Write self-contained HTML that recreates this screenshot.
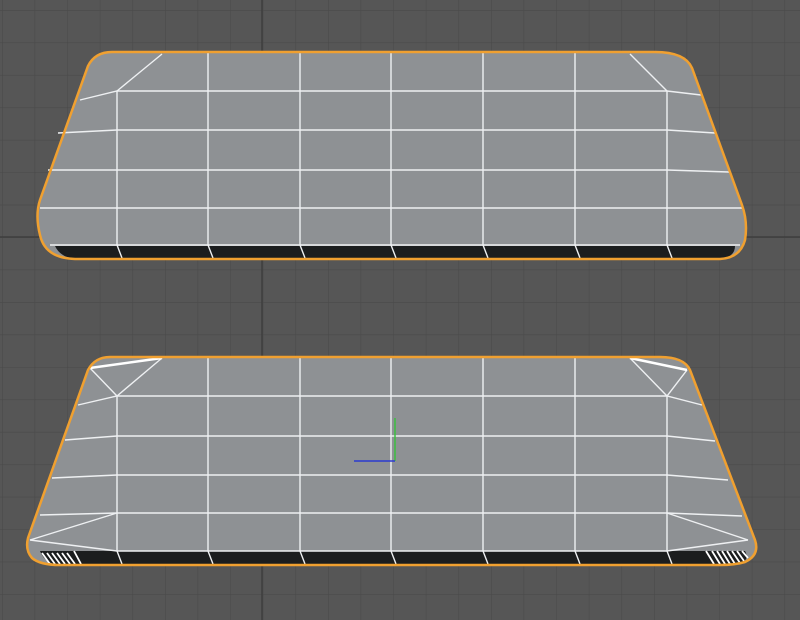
<!DOCTYPE html>
<html><head><style>html,body{margin:0;padding:0;background:#565656;}svg{display:block}</style></head>
<body>
<svg width="800" height="620" viewBox="0 0 800 620" xmlns="http://www.w3.org/2000/svg">
<defs>
<pattern id="g" x="2" y="10" width="32.6" height="32.45" patternUnits="userSpaceOnUse">
<path d="M0 0V32.45M0 0H32.6" stroke="#4a4a4a" stroke-width="1.2" fill="none"/>
</pattern>
</defs>
<rect width="800" height="620" fill="#565656"/>
<rect width="800" height="620" fill="url(#g)"/>
<line x1="262" y1="0" x2="262" y2="620" stroke="#3e3e3e" stroke-width="1.5"/>
<line x1="0" y1="237" x2="800" y2="237" stroke="#3e3e3e" stroke-width="1.5"/>

<!-- top shape -->
<path d="M112 52 H655 Q685 52 692 68 L742 205 Q748 222 745 240 Q740 258 720 259 H75 Q45 258 40 235 Q35 215 40 200 L88 66 Q95 52 112 52 Z" fill="#8e9194"/>
<path d="M55 246 H735 Q735 258 718 259 H75 Q60 257 55 246Z" fill="#1b1d1e"/>
<g stroke="#eef0f2" stroke-width="1.4" fill="none">
<path d="M80 100 L117 91 H667 L701 95"/>
<path d="M58 133 L117 130 H667 L715 133"/>
<path d="M48 170 L117 170 H667 L729 172"/>
<path d="M40 208 H743"/>
<path d="M50 245 H740"/>
<path d="M117 91 L162 54 M667 91 L630 54"/>
<path d="M117 91 V245 M208 52 V245 M300 52 V245 M391 52 V245 M483 52 V245 M575 52 V245 M667 91 V245"/>
<path d="M117 245 l5 13 M208 245 l5 13 M300 245 l5 13 M391 245 l5 13 M483 245 l5 13 M575 245 l5 13 M667 245 l5 13"/>
</g>
<path d="M112 52 H655 Q685 52 692 68 L742 205 Q748 222 745 240 Q740 258 720 259 H75 Q45 258 40 235 Q35 215 40 200 L88 66 Q95 52 112 52 Z" fill="none" stroke="#f0a030" stroke-width="2.5"/>

<!-- bottom shape -->
<path d="M110 357 H660 Q684 357 690 370 L755 540 Q760 555 745 562 Q735 565 720 565 H60 Q40 565 32 558 Q25 550 28 538 L88 370 Q95 357 110 357 Z" fill="#8e9194"/>
<path d="M40 551 H745 Q750 560 740 563 L720 565 H60 Q45 564 40 551Z" fill="#1b1d1e"/>
<g stroke="#ffffff" stroke-width="1.8" fill="none">
<path d="M42 553 L50 564 M47 553 L55 564 M52 553 L60 564 M57 553 L65 564 M62 553 L70 564 M67 553 L75 564 M74 551 L81 564"/>
<path d="M712 551 L720 564 M717 551 L725 564 M722 551 L730 564 M727 551 L735 564 M732 551 L740 563 M737 551 L744 561 M742 551 L748 558 M706 551 L714 564"/>
</g>
<g stroke="#eef0f2" stroke-width="1.4" fill="none">
<path d="M78 405 L117 396 H667 L702 405"/>
<path d="M65 440 L117 436 H667 L715 441"/>
<path d="M52 478 L117 475 H667 L728 480"/>
<path d="M40 515 L117 513 H667 L742 516"/>
<path d="M30 540 L117 551 H667 L748 540"/>
<path d="M30 540 L117 513 M748 540 L667 513"/>
<path d="M90 368 L117 396 L162 358 M687 370 L667 396 L630 358"/>
<path d="M117 396 V551 M208 357 V551 M300 357 V551 M391 357 V551 M483 357 V551 M575 357 V551 M667 396 V551"/>
<path d="M117 551 l5 13 M208 551 l5 13 M300 551 l5 13 M391 551 l5 13 M483 551 l5 13 M575 551 l5 13 M667 551 l5 13"/>
</g>
<path d="M90 368 L162 358 M687 370 L630 358" stroke="#fff" stroke-width="2.5"/>
<path d="M110 357 H660 Q684 357 690 370 L755 540 Q760 555 745 562 Q735 565 720 565 H60 Q40 565 32 558 Q25 550 28 538 L88 370 Q95 357 110 357 Z" fill="none" stroke="#f0a030" stroke-width="2.5"/>

<!-- axis gizmo -->
<line x1="395" y1="418" x2="395" y2="461" stroke="#3cc040" stroke-width="1.5"/>
<line x1="354" y1="461" x2="395" y2="461" stroke="#2a3ad0" stroke-width="1.5"/>
</svg>
</body></html>
